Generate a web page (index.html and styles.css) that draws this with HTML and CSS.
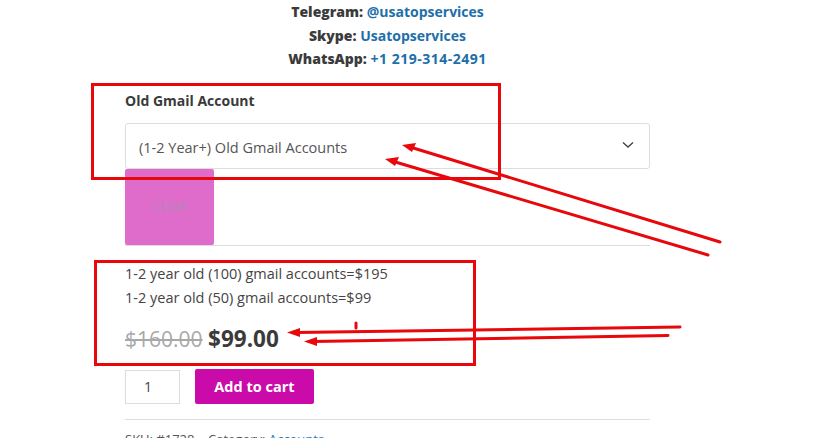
FILE: index.html
```html
<!DOCTYPE html>
<html>
<head>
<meta charset="utf-8">
<link rel="stylesheet" href="styles.css">
</head>
<body>
<div class="page">
  <div class="content">
    <div class="contacts">
      <p><strong>Telegram:</strong> <a href="#">@usatopservices</a></p>
      <p><strong>Skype:</strong> <a href="#">Usatopservices</a></p>
      <p><strong>WhatsApp:</strong> <a href="#" class="wide">+1 219-314-2491</a></p>
    </div>
    <div class="variation">
      <label class="var-label">Old Gmail Account</label>
      <div class="select">
        <span>(1-2 Year+) Old Gmail Accounts</span>
        <svg class="chev" width="12" height="8" viewBox="0 0 12 8"><path d="M1 1.5 L6 6 L11 1.5" fill="none" stroke="#444" stroke-width="1.4"/></svg>
      </div>
      <button class="clear">CLEAR</button>
    </div>
    <div class="desc">
      <p>1-2 year old (100) gmail accounts=$195</p>
      <p>1-2 year old (50) gmail accounts=$99</p>
    </div>
    <div class="price"><del>$160.00</del> <ins>$99.00</ins></div>
    <div class="cart">
      <div class="qty">1</div>
      <button class="add">Add to cart</button>
    </div>
    <div class="meta">SKU: #1728 &nbsp;&nbsp; Category: <a href="#">Accounts</a></div>
  </div>
  <svg class="marks" width="828" height="438" viewBox="0 0 828 438">
    <g fill="none" stroke="#e8080b" stroke-width="3">
      <rect x="92.5" y="84.5" width="407" height="94"/>
      <rect x="95.5" y="261.5" width="379" height="103"/>
    </g>
    <g stroke="#e8080b" stroke-width="3" stroke-linecap="round">
      <line x1="720" y1="242" x2="410" y2="147"/>
      <line x1="708" y1="255" x2="392" y2="161"/>
      <line x1="680" y1="327" x2="296" y2="332.5"/>
      <line x1="668" y1="335.5" x2="313" y2="341.5"/>
      <line x1="356" y1="323" x2="356" y2="328"/>
    </g>
    <g fill="#e8080b">
      <polygon points="402,145 416,143 412,152"/>
      <polygon points="385,159 399,157 395,166"/>
      <polygon points="287,332.5 300,328 300,337"/>
      <polygon points="304,341.5 317,337 317,346"/>
    </g>
  </svg>
</div>
</body>
</html>
```
FILE: styles.css
```css
html, body { margin: 0; padding: 0; background: #fff; }
body { font-family: "Open Sans", "Liberation Sans", sans-serif; color: #444; }
.page { position: relative; width: 828px; height: 438px; overflow: hidden; }
.content { width: 525px; margin-left: 125px; }
.contacts { text-align: center; padding-top: 0; }
.contacts p { margin: 0; font-size: 14px; line-height: 23.5px; font-weight: 700; color: #3b3b3b; }
.contacts a { color: #1e6fa9; text-decoration: none; }
.contacts a.wide { letter-spacing: 0.5px; }
.variation { margin-top: 20px; }
.var-label { display: block; font-weight: 700; font-size: 14px; line-height: 20px; color: #3a3a3a; }
.select { margin-top: 12px; height: 46px; box-sizing: border-box; border: 1px solid #ddd; border-radius: 3px; display: flex; align-items: center; justify-content: space-between; padding: 3px 13px 0 13px; font-size: 14.5px; color: #555; }
.chev { margin-right: 2px; margin-top: -4px; }
.clear { display: block; margin-top: 0; width: 89px; height: 76px; border: 0; border-radius: 2px; background: #df6cca; color: #a98bb3; font-family: "Open Sans", sans-serif; font-size: 11.5px; padding: 0; letter-spacing: 0.2px; }
.desc { border-top: 1px solid #ddd; padding-top: 16px; }
.desc p { margin: 0; font-size: 14.5px; line-height: 24px; color: #444; }
.price { margin-top: 15px; font-size: 21px; line-height: 28px; }
.price del { color: #a8a8a8; }
.price ins { text-decoration: none; font-weight: 700; color: #3a3a3a; font-size: 22.5px; }
.cart { display: flex; align-items: flex-start; margin-top: 17px; gap: 15px; }
.qty { width: 55px; height: 34px; box-sizing: border-box; border: 1px solid #ddd; font-size: 14px; line-height: 32px; padding-left: 18px; color: #444; }
.add { width: 119px; height: 35px; margin-top: -1px; border: 0; border-radius: 2px; background: #cb0ba9; color: #fff; font-family: "Open Sans", sans-serif; font-weight: 700; font-size: 14.5px; padding: 0; }
.meta { margin-top: 15px; border-top: 1px solid #ddd; padding-top: 9px; font-size: 13px; color: #555; line-height: 20px; }
.meta a { color: #1e73be; text-decoration: none; }
.marks { position: absolute; left: 0; top: 0; pointer-events: none; }
```
